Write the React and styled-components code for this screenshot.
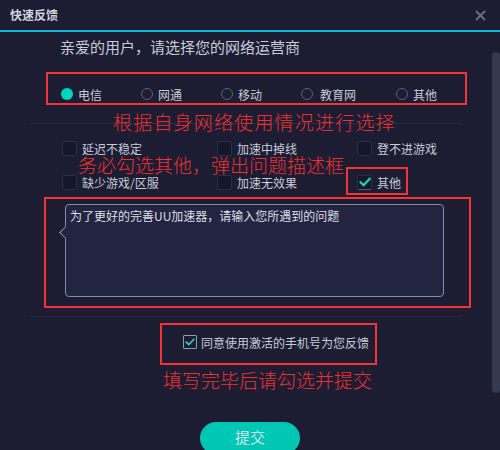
import React from "react";
import styled, { createGlobalStyle } from "styled-components";

const Global = createGlobalStyle`
  html, body { margin: 0; padding: 0; background: #1c1d33; }
  body { font-family: "Noto Sans CJK SC", "Noto Sans", sans-serif; }
  * { box-sizing: border-box; }
`;

const Page = styled.div`
  position: relative;
  width: 500px;
  height: 450px;
  overflow: hidden;
  background: #1c1d33;
  color: #c8cad8;
`;

const TitleBar = styled.div`
  height: 32px;
  border-bottom: 2px solid #13b6d6;
  display: flex;
  align-items: center;
  justify-content: space-between;
  padding: 0 14px 0 10px;
  background: #1c1d33;
`;

const Title = styled.div`
  font-size: 12px;
  font-weight: 700;
  color: #d2d4de;
  line-height: 30px;
`;

const Close = styled.svg`
  width: 11px;
  height: 11px;
  display: block;
`;

const Intro = styled.div`
  margin: 5px 0 0 60px;
  font-size: 15px;
  line-height: 20px;
  color: #c9cbd9;
`;

const RadioRow = styled.div`
  display: flex;
  align-items: center;
  height: 20px;
  margin-top: 27px;
  padding-left: 61px;
`;

const RadioItem = styled.div`
  display: flex;
  align-items: center;
  width: ${(p) => (p.$w ? `${p.$w}px` : "auto")};
  font-size: 12px;
  color: #c8cad8;
  gap: ${(p) => p.$gap || 5}px;
`;

const Circle = styled.span`
  width: 12px;
  height: 12px;
  border-radius: 50%;
  background: ${(p) => (p.$on ? "#00d5c1" : "transparent")};
  border: ${(p) => (p.$on ? "none" : "1.5px solid #5c5f78")};
  flex: none;
`;

const Separator = styled.div`
  height: 1px;
  width: 432px;
  margin: ${(p) => p.$top}px 0 0 30px;
  background: #2a2c44;
`;

const CheckGrid = styled.div`
  display: grid;
  grid-template-columns: 155px 140px 120px;
  row-gap: 14px;
  margin-top: 14px;
  padding-left: 62px;
`;

const CheckItem = styled.div`
  display: flex;
  align-items: center;
  gap: 5px;
  height: 20px;
  font-size: 12px;
  color: #c8cad8;
`;

const Box = styled.span`
  width: 15px;
  height: 15px;
  border-radius: 2px;
  background: #15172a;
  border: 1px solid #2b2e45;
  border-bottom-color: ${(p) => (p.$on ? "#55586e" : "#2b2e45")};
  display: flex;
  align-items: center;
  justify-content: center;
  flex: none;
`;

const TextArea = styled.div`
  position: relative;
  margin: 12px 0 0 65px;
  width: 379px;
  height: 93px;
  border: 1px solid #8a8ca2;
  border-radius: 4px;
  background: #232540;
  padding: 2px 4px;
  font-size: 12px;
  line-height: 18px;
  color: #dcdeea;

  &::before {
    content: "";
    position: absolute;
    left: -5px;
    top: 23px;
    width: 8px;
    height: 8px;
    background: #232540;
    border-left: 1px solid #8a8ca2;
    border-bottom: 1px solid #8a8ca2;
    transform: rotate(45deg);
  }
`;

const AgreeRow = styled.div`
  display: flex;
  align-items: center;
  gap: 4px;
  height: 20px;
  margin-top: 15px;
  padding-left: 183px;
  font-size: 12px;
  color: #c8cad8;
`;

const AgreeBox = styled.span`
  width: 14px;
  height: 14px;
  border: 1.5px solid #9597ac;
  border-radius: 1px;
  display: flex;
  align-items: center;
  justify-content: center;
  flex: none;
`;

const Submit = styled.button`
  display: flex;
  align-items: center;
  justify-content: center;
  margin: 70px 0 0 200px;
  width: 100px;
  height: 32px;
  border: none;
  border-radius: 16px;
  background: #00c7b3;
  color: #d3e6ee;
  font-family: inherit;
  font-size: 15px;
  padding: 0 0 4px 0;
`;

const Scrollbar = styled.div`
  position: absolute;
  left: 492px;
  top: 52px;
  width: 8px;
  height: 341px;
  border-radius: 4px;
  background: #363950;
`;

const RedBox = styled.div`
  position: absolute;
  left: ${(p) => p.$x}px;
  top: ${(p) => p.$y}px;
  width: ${(p) => p.$w}px;
  height: ${(p) => p.$h}px;
  border: 2px solid #f43434;
  pointer-events: none;
`;

const Note = styled.div`
  position: absolute;
  left: ${(p) => p.$x}px;
  top: ${(p) => p.$y}px;
  font-size: ${(p) => p.$size}px;
  letter-spacing: ${(p) => p.$ls || 0}px;
  line-height: 24px;
  font-weight: 300;
  color: #ee3030;
  white-space: nowrap;
`;

const Check = ({ size = 12, stroke = 2.2 }) => (
  <svg width={size} height={size} viewBox="0 0 12 12">
    <path d="M1.5 6.2 L4.6 9.2 L10.6 2.8" fill="none" stroke="#1fd3c3" strokeWidth={stroke} strokeLinecap="square" />
  </svg>
);

const radios = [
  { label: "电信", on: true, w: 80 },
  { label: "网通", w: 80 },
  { label: "移动", w: 80 },
  { label: "教育网", w: 95, gap: 7 },
  { label: "其他" },
];

const checks = [
  { label: "延迟不稳定" },
  { label: "加速中掉线" },
  { label: "登不进游戏" },
  { label: "缺少游戏/区服" },
  { label: "加速无效果" },
  { label: "其他", on: true },
];

export default function App() {
  return (
    <Page>
      <Global />
      <TitleBar>
        <Title>快速反馈</Title>
        <Close viewBox="0 0 11 11">
          <path d="M1 1 L10 10 M10 1 L1 10" stroke="#6c6f86" strokeWidth="1.8" />
        </Close>
      </TitleBar>
      <Intro>亲爱的用户，请选择您的网络运营商</Intro>
      <RadioRow>
        {radios.map((r) => (
          <RadioItem key={r.label} $w={r.w} $gap={r.gap}>
            <Circle $on={r.on} />
            {r.label}
          </RadioItem>
        ))}
      </RadioRow>
      <Separator $top={19} />
      <CheckGrid>
        {checks.map((c) => (
          <CheckItem key={c.label}>
            <Box $on={c.on}>{c.on && <Check />}</Box>
            {c.label}
          </CheckItem>
        ))}
      </CheckGrid>
      <TextArea>为了更好的完善UU加速器，请输入您所遇到的问题</TextArea>
      <Separator $top={19} />
      <AgreeRow>
        <AgreeBox>
          <Check size={10} stroke={2} />
        </AgreeBox>
        同意使用激活的手机号为您反馈
      </AgreeRow>
      <Submit>提交</Submit>

      <Scrollbar />

      <RedBox $x={46} $y={72} $w={421} $h={33} />
      <Note $x={113} $y={110} $size={19} $ls={1.2}>根据自身网络使用情况进行选择</Note>
      <Note $x={78} $y={153} $size={19}>务必勾选其他，弹出问题描述框</Note>
      <RedBox $x={346} $y={167} $w={62} $h={28} />
      <RedBox $x={44} $y={197} $w={427} $h={111} />
      <RedBox $x={160} $y={323} $w={217} $h={42} />
      <Note $x={163} $y={368} $size={19}>填写完毕后请勾选并提交</Note>
    </Page>
  );
}
